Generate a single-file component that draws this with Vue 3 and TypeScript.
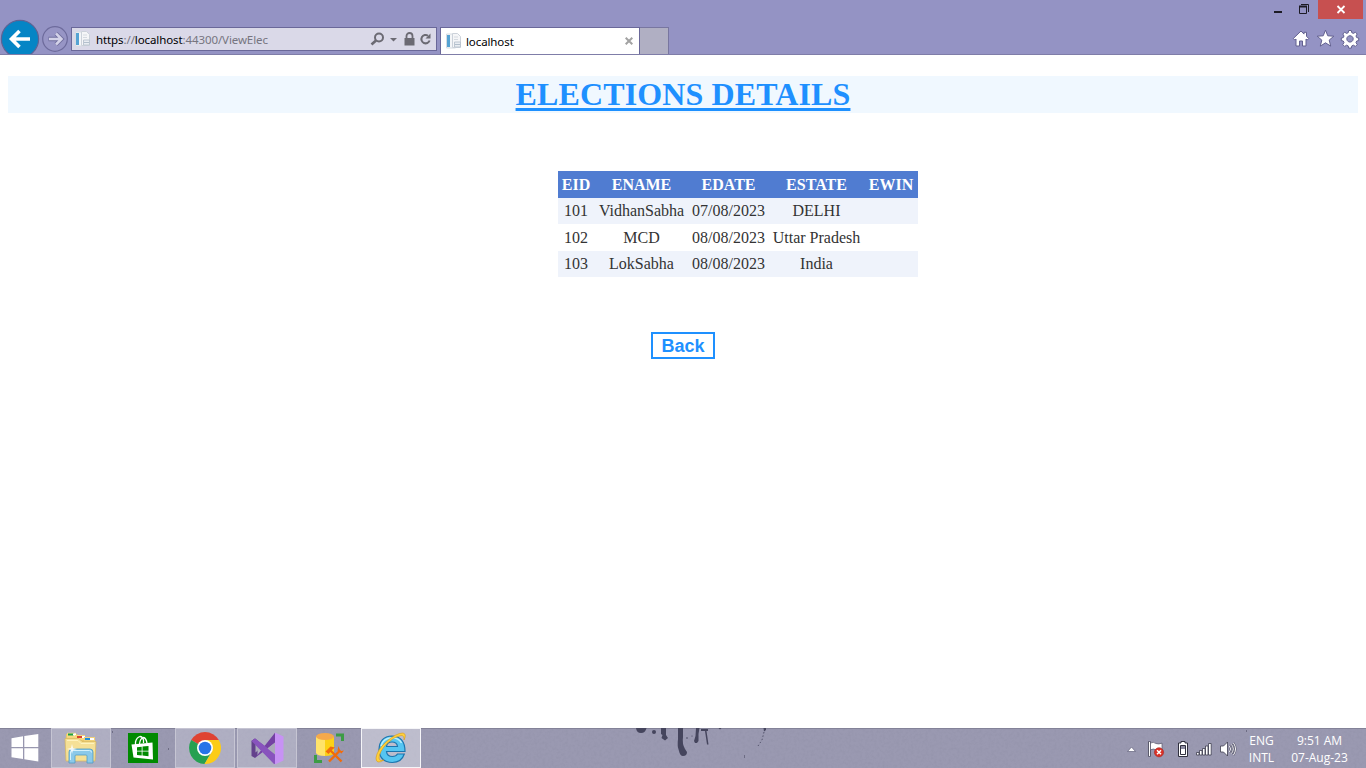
<script setup lang="ts">
interface Election {
  id: number
  name: string
  date: string
  state: string
  winner: string
}

const columns: string[] = ['EID', 'ENAME', 'EDATE', 'ESTATE', 'EWIN']

const elections: Election[] = [
  { id: 101, name: 'VidhanSabha', date: '07/08/2023', state: 'DELHI', winner: '' },
  { id: 102, name: 'MCD', date: '08/08/2023', state: 'Uttar Pradesh', winner: '' },
  { id: 103, name: 'LokSabha', date: '08/08/2023', state: 'India', winner: '' },
]
</script>

<template>
  <div class="screen">
    <header class="chrome">
      <svg class="nav" width="71" height="36" viewBox="0 18 71 36">
        <circle cx="20" cy="39" r="18.6" fill="#0585c5" stroke="#5f6395" stroke-width="1.2" />
        <path d="M30 39H12M19.5 31L11.5 39L19.5 47" fill="none" stroke="#fff" stroke-width="3.6" />
        <circle cx="55" cy="39" r="12.3" fill="#9795c5" stroke="#6d6b9c" stroke-width="1.2" />
        <path d="M48.5 39H61M56 33.5L61.5 39L56 44.5" fill="none" stroke="#716f9f" stroke-width="4.4" />
        <path d="M49 39H61M56 33.5L61.5 39L56 44.5" fill="none" stroke="#d3d2e8" stroke-width="2.5" />
      </svg>

      <div class="address">
        <svg class="page-icon" width="16" height="16" viewBox="0 0 16 16">
          <path d="M.5 1h9v14h-9z" fill="#f4f6f8" stroke="#d6dce2" />
          <path d="M1 2h3v12H1z" fill="#55a3d3" />
          <path d="M6.500.500h5l3 3v11h-8z" fill="#f5f6f8" stroke="#ccd2da" />
          <path d="M8 4h4M8 6.500h4" stroke="#d5dae0" />
          <path d="M8.500 9h6v5h-6z" fill="#e9edf2" stroke="#bcc6d1" />
          <path d="M9 11.500h5" stroke="#b2bfcc" />
        </svg>
        <span class="url">https<i>://</i>localhost<i>:44300/ViewElec</i></span>
        <svg class="tools" width="64" height="16" viewBox="0 0 64 16">
          <circle cx="9" cy="6.500" r="4" fill="none" stroke="#6b6a73" stroke-width="2" />
          <path d="M6 9.500L1.500 13.500" stroke="#6b6a73" stroke-width="2.600" />
          <path d="M20 7h7L23.500 10.500z" fill="#6b6a73" />
          <path d="M34.500 7h10v7.500h-10z" fill="#6b6a73" />
          <path d="M36.500 7.500V5a3 3 0 0 1 6 0v2.500" fill="none" stroke="#6b6a73" stroke-width="1.800" />
          <path d="M58 4.700A4.200 4.200 0 1 0 59.600 9.500" fill="none" stroke="#6b6a73" stroke-width="2" />
          <path d="M60.500 2.500V7.500h-5z" fill="#6b6a73" />
        </svg>
      </div>

      <div class="tab">
        <svg class="page-icon" width="16" height="16" viewBox="0 0 16 16">
          <path d="M.5 1h9v14h-9z" fill="#f4f6f8" stroke="#d6dce2" />
          <path d="M1 2h3v12H1z" fill="#55a3d3" />
          <path d="M6.500.500h5l3 3v11h-8z" fill="#f5f6f8" stroke="#ccd2da" />
          <path d="M8 4h4M8 6.500h4" stroke="#d5dae0" />
          <path d="M8.500 9h6v5h-6z" fill="#e9edf2" stroke="#bcc6d1" />
          <path d="M9 11.500h5" stroke="#b2bfcc" />
        </svg>
        <span class="tab-title">localhost</span>
        <svg class="tab-close" width="8" height="8" viewBox="0 0 8 8">
          <path d="M.7.7L7.300 7.300M7.300.7L.7 7.300" stroke="#a2a2a2" stroke-width="2" />
        </svg>
      </div>
      <div class="new-tab"></div>

      <svg class="window-tools" width="116" height="54" viewBox="1250 0 116 54">
        <path d="M1274 11h8v2h-8z" fill="#1c1b25" />
        <path d="M1299.500 6.500h7v7h-7z" fill="none" stroke="#1c1b25" />
        <path d="M1299 5.500h8v2h-8z" fill="#1c1b25" />
        <path d="M1301 4.500h7.500v7.500" fill="none" stroke="#1c1b25" />
        <path d="M1318 0h45v19h-45z" fill="#c75050" />
        <path d="M1337.500 6L1344.500 13M1344.500 6L1337.500 13" stroke="#fff" stroke-width="1.800" />
        <g fill="#fff" stroke="#62608f" stroke-width="1" stroke-linejoin="round">
          <path d="M1301 31l-7.700 7.500 1.500 1.500 1.200-1v7h3.500v-5h3v5h3.500v-7l1.200 1 1.500-1.500-2.200-2.200v-4h-2.500v1.800z" />
          <path d="M1325.500 30.200l2.300 5.600 6 .4-4.600 3.900 1.500 6-5.200-3.300-5.200 3.300 1.500-6-4.600-3.900 6-.4z" />
          <path fill-rule="evenodd" d="M1348.700 30.500h2.600l.5 2.200 1.600.7 2-1.200 1.800 1.800-1.200 2 .7 1.600 2 .4v2.600l-2 .4-.7 1.600 1.200 2-1.800 1.800-2-1.200-1.600.7-.5 2.200h-2.600l-.5-2.200-1.600-.7-2 1.200-1.800-1.800 1.200-2-.7-1.600-2-.4v-2.600l2-.4.7-1.600-1.200-2 1.800-1.800 2 1.200 1.600-.7zM1350 35.700a3.200 3.200 0 1 0 .01 0z" />
        </g>
      </svg>
    </header>

    <main class="page">
      <h1><span>ELECTIONS DETAILS</span></h1>
      <table>
        <colgroup>
          <col class="c-id" /><col class="c-name" /><col class="c-date" /><col class="c-state" /><col class="c-win" />
        </colgroup>
        <thead>
          <tr><th v-for="c in columns" :key="c">{{ c }}</th></tr>
        </thead>
        <tbody>
          <tr v-for="e in elections" :key="e.id">
            <td>{{ e.id }}</td>
            <td>{{ e.name }}</td>
            <td>{{ e.date }}</td>
            <td>{{ e.state }}</td>
            <td>{{ e.winner }}</td>
          </tr>
        </tbody>
      </table>
      <button class="back" type="button">Back</button>
    </main>

    <footer class="taskbar">
      <svg class="wallpaper" width="1366" height="40" viewBox="0 0 1366 40">
        <defs>
          <filter id="paper" x="0" y="0" width="100%" height="100%">
            <feTurbulence type="fractalNoise" baseFrequency="0.35" numOctaves="3" seed="4" />
            <feColorMatrix values="0 0 0 0 .25  0 0 0 0 .25  0 0 0 0 .35  1.400 0 0 0 -.55" />
          </filter>
        </defs>
        <rect width="1366" height="40" filter="url(#paper)" opacity=".38" />
        <path d="M0 .5h1366" stroke="#838298" />
        <g fill="#45455d">
          <path d="M636 0h10.500q-1 5-5.500 5t-5-5z" />
          <circle cx="654" cy="4" r="2" />
          <path d="M661 0h5v7l2 3-3 2.500-3.500-2.500 1-3-1.500-1z" />
          <path d="M678 0h5v9q-1 7 2 12l2 3q0 4-4 4-3 0-4-5-2-5-1-12z" />
          <path d="M696 0h3.500l-1 6v7l-1.500 2h-2l-1-2 1.500-5z" />
          <path d="M701 1h7v2h-1.500l2 13.500h-1.500L705 3h-4z" />
          <path d="M718.500 0h3l-1.500 1.500zM763.500 0h2.500v2l-2 1.500z" />
          <circle cx="687" cy="10" r=".8" /><circle cx="692" cy="8" r=".6" />
        </g>
        <path d="M764 4l-2 8-4 6" fill="none" stroke="#55556d" stroke-dasharray="1.500 2" />
        <path d="M744.500 27v3M112.500 3v2M168.500 20v2M1246.500 2v2" stroke="#5c5b72" opacity=".7" />
      </svg>

      <div class="start">
        <svg width="28" height="28" viewBox="0 0 28 28">
          <path d="M.5 4.200L12 2.300V13H.5zM13.300 2.100L27.300 0v13h-14zM.5 14.300H12V25L.5 23.200zM13.300 14.300h14v13.200l-14-2.200z" fill="#fff" />
        </svg>
      </div>

      <div class="task open">
        <svg width="34" height="32" viewBox="0 0 34 32">
          <path d="M2 2h11l2 3h10l2 2h4v22H2z" fill="#e7c76a" />
          <path d="M3 .8h9v5H3z" fill="#f5d982" />
          <path d="M4 1.500h6v2H4z" fill="#18a044" /><path d="M9 1.500h3v2H9z" fill="#fff" />
          <path d="M11 3h10v5H11z" fill="#f5d77e" /><path d="M13 4h5v2h-5z" fill="#da412c" /><path d="M18 4h3v2h-3z" fill="#fff" />
          <path d="M20 5h11v5H20z" fill="#f1d27a" /><path d="M21 6h5v2h-5z" fill="#208dda" /><path d="M26 6h4v2h-4z" fill="#fff" />
          <path d="M1 6.500h14l3 3h14L31 29H2z" fill="#f5e096" stroke="#d9b65a" stroke-width=".7" />
          <path d="M3 8.500h11l3 3h13" fill="none" stroke="#fff3bd" />
          <path d="M5 31V20q0-3 3-3h18q3 0 3 3v11h-6v-7q0-1-1-1H12q-1 0-1 1v7z" fill="#8bc9e9" stroke="#4f9cc4" stroke-width=".8" />
          <path d="M6.500 28v-8q0-1.500 2-1.500h17q2 0 2 2" fill="none" stroke="#d5f1fb" />
          <path d="M8 12l1 4 4 1-4 1-1 4-1-4-4-1 4-1z" fill="#fff" opacity=".85" />
        </svg>
      </div>

      <div class="task">
        <svg width="30" height="30" viewBox="0 0 30 30">
          <path d="M0 0h30v30H0z" fill="#008a00" />
          <path d="M3.500 11.500L24.500 9.500 25 26.500 5.500 24.500z" fill="#fff" />
          <path d="M7.500 12V9Q8.500 4.500 12 3.500q2.500 0 3.500 3.500v3M11.500 11q.5-5.500 4-6.500 2.500.5 3.500 5.500" fill="none" stroke="#fff" stroke-width="1.300" />
          <path d="M9 14.200l4.700-.5v4H9zm5.500-.6l6-.6v4.700h-6zM9 18.500h4.700v4l-4.700-.5zm5.500 0h6V23.300l-6-.7z" fill="#008a00" />
        </svg>
      </div>

      <div class="task open">
        <svg width="32" height="32" viewBox="0 0 32 32">
          <path d="M16 16L2.200 8A16 16 0 0 1 29.800 8z" fill="#df4332" />
          <path d="M16 16L2.200 8A16 16 0 0 0 15.500 32L22.500 20z" fill="#26a051" />
          <path d="M16 8h13.800A16 16 0 0 1 15.500 32L23 19.500z" fill="#fccc16" />
          <circle cx="16" cy="16" r="8" fill="#fff" />
          <circle cx="16" cy="16" r="6.300" fill="#2774e8" />
        </svg>
      </div>

      <div class="task open">
        <svg width="33" height="33" viewBox="0 0 33 33">
          <path d="M.5 9L4 6.500 24 22v9.500z" fill="#7549ad" />
          <path d="M.5 9L4 6.500 6.500 8.500v15L4 26 .5 24z" fill="#63418c" />
          <path d="M4.500 12.500v8L9 16.500z" fill="#aaa9b9" />
          <path d="M4 26L24 .8v10L6.500 24z" fill="#7441a3" />
          <path d="M.5 9L4 6.500l21 16v9L23 32z" fill="#8853bd" />
          <path d="M24 .5l8.500 4v24l-8.500 4z" fill="#c792f4" />
          <path d="M24 10.500v12l-7.500-6z" fill="#aaa9b9" />
        </svg>
      </div>

      <div class="task">
        <svg width="32" height="32" viewBox="0 0 32 32">
          <path d="M3 5v16q1 3 9 3V5z" fill="#ffe36a" />
          <path d="M12 5v19q8 0 9-3V5z" fill="#fcd116" />
          <ellipse cx="12" cy="4.500" rx="9" ry="3.500" fill="#f5a94c" />
          <path d="M23 1.500h8v7.500h-3V4.500h-5zM1 23h3v5h5v3H1z" fill="#3c9c45" />
          <path d="M16.500 17.500l12 12M27 18.500L16 29.500" stroke="#f26b0a" stroke-width="2.400" />
          <path d="M12.500 19.500l5-5 4.500 1-2.500 2-4 4.500zM25.500 14l-1 4.500 4 3 2.500-3-3 .5-1.500-2z" fill="#f26b0a" />
        </svg>
      </div>

      <div class="task active">
        <svg width="32" height="32" viewBox="0 0 32 32">
          <path d="M30 19.500H11.500q.5 5 6 5 3.500 0 5-2.500h6.800q-2.800 8.500-12 8.500Q4.500 30 4 17.500 4.500 4.500 17 4 30 4.500 30 19.500zM11.500 14.500h11q-.5-4.500-5.500-4.500t-5.500 4.500z" fill="#55c5f2" fill-rule="evenodd" stroke="#1c75ae" stroke-width="1.200" />
          <path d="M6 14q2-7.500 10.500-8.200 7.500 0 10 5.200" fill="none" stroke="#b9effc" stroke-width="1.600" />
          <path d="M9 28Q1 33 1 26 2 18 11 10 21 1 28 1q4 1 1 7 .5-4.500-3-4.500-7 1-14 8Q4 20 4 26q.5 3.500 5 2z" fill="#ffd03a" stroke="#d99b16" stroke-width=".6" />
        </svg>
      </div>

      <svg class="tray" width="116" height="18" viewBox="1124 740 116 18">
        <path d="M1127.500 751.500h8l-4-4.500z" fill="#fff" stroke="#62617b" stroke-width=".7" />
        <path d="M1149.500 741.500v15" stroke="#3e3e50" stroke-width="3" />
        <path d="M1149.500 742v14" stroke="#fff" stroke-width="1.300" />
        <path d="M1150.500 743q3-1.500 5.500.5 2.500 1 6-.3v6.500q-3 1-6 .1-2.500-1.500-5.500 0z" fill="#fff" stroke="#565568" stroke-width=".7" />
        <circle cx="1159" cy="752.300" r="4.600" fill="#da3126" stroke="#a72827" stroke-width=".6" />
        <path d="M1157 750.300l4 4m0-4l-4 4" stroke="#fff" stroke-width="1.500" />
        <path d="M1181 741.500h4v1.500h2.500v13.500h-9v-13.500h2.500z" fill="#fff" stroke="#30303e" />
        <path d="M1180.500 745.500h5v9h-5z" fill="#8c8ba1" stroke="#30303e" />
        <path d="M1181 749h4v5h-4z" fill="#fff" />
        <g fill="#fff" stroke="#3d3d4f" stroke-width=".8">
          <path d="M1196.500 752.500h2.500v2.500h-2.500zM1199.500 750.500h2.500v4.500h-2.500zM1202.500 748.500h2.500v6.500h-2.500zM1205.500 746h2.500v9h-2.500zM1208.500 743.500h2.700v11.500h-2.700z" />
          <path d="M1220.500 746h3l4-4v14l-4-4h-3z" />
        </g>
        <path d="M1229.500 746q2 3 0 6M1231.500 744.500q3.500 4.500 0 9M1233.500 743q4 6 0 12" fill="none" stroke="#4b4a60" stroke-width="2" />
        <path d="M1229.500 746q2 3 0 6M1231.500 744.500q3.500 4.500 0 9M1233.500 743q4 6 0 12" fill="none" stroke="#fff" stroke-width="1" />
      </svg>
      <div class="lang"><span>ENG</span><span>INTL</span></div>
      <div class="clock"><span class="time">9:51 AM</span><span class="date">07-Aug-23</span></div>
    </footer>
  </div>
</template>

<style>
body {
  margin: 0;
  overflow: hidden;
}
</style>

<style scoped>
.screen {
  width: 1366px;
  height: 768px;
  display: flex;
  flex-direction: column;
  background: #fff;
}

.screen svg {
  display: block;
  flex: none;
}

.chrome {
  box-sizing: border-box;
  height: 55px;
  flex: none;
  display: flex;
  align-items: flex-end;
  background: #9493c4;
  border-bottom: 1px solid #7f7da8;
  font-family: "Noto Sans", "Open Sans", sans-serif;
  font-size: 12px;
}

.address {
  box-sizing: border-box;
  width: 366px;
  height: 24px;
  margin: 0 3px 3px 0;
  padding: 0 2px 0 3px;
  display: flex;
  align-items: center;
  background: #dad9e8;
  border: 1px solid #6a6899;
}

.url {
  margin-left: 5px;
  color: #000;
  white-space: nowrap;
  font-size: 11.5px;
  letter-spacing: -0.1px;
}

.url i {
  font-style: normal;
  color: #76757f;
}

.tools {
  margin-left: auto;
}

.tab {
  box-sizing: border-box;
  width: 200px;
  height: 27px;
  padding: 0 6px 0 5px;
  display: flex;
  align-items: center;
  background: #fff;
  border: 1px solid #6a6899;
  border-bottom: 0;
}

.tab-title {
  margin-left: 4px;
  font-size: 11.5px;
  letter-spacing: -0.1px;
}

.tab-close {
  margin-left: auto;
}

.new-tab {
  box-sizing: border-box;
  width: 29px;
  height: 27px;
  background: #b0afc3;
  border: 1px solid #7876a0;
  border-width: 1px 1px 0 0;
}

.window-tools {
  margin-left: auto;
}

.page {
  flex: 1;
  padding: 21px 8px 0;
  display: flex;
  flex-direction: column;
  align-items: center;
  font-family: "Liberation Serif", "Times New Roman", serif;
}

h1 {
  align-self: stretch;
  height: 37px;
  margin: 0 0 58px;
  background: #f0f8ff;
  color: #1e90ff;
  font-size: 32px;
  line-height: 37px;
  text-align: center;
}

h1 span {
  letter-spacing: 0.12px;
  text-decoration: underline;
  text-decoration-thickness: 3px;
  text-decoration-skip-ink: none;
  text-underline-offset: 3px;
}

table {
  width: 360px;
  margin-left: 110px;
  table-layout: fixed;
  border-collapse: collapse;
  color: #333;
  font-size: 16px;
  line-height: 18px;
  text-align: center;
  white-space: nowrap;
}

.c-id { width: 37px; }
.c-name { width: 94px; }
.c-date { width: 80px; }
.c-state { width: 96px; }
.c-win { width: 53px; }

th,
td {
  box-sizing: border-box;
  height: 26.5px;
  padding: 0 1px 0 0;
}

th,
tbody tr:nth-child(2) td {
  padding-top: 2px;
}

thead tr {
  background: #507cd1;
  color: #fff;
}

tbody tr:nth-child(odd) {
  background: #eff3fb;
}

.back {
  width: 64px;
  height: 27px;
  margin-top: 55px;
  padding: 1px 0 0;
  background: #fff;
  border: 2px solid #1e90ff;
  color: #1e90ff;
  font: bold 18px/22px "Liberation Sans", Arial, sans-serif;
}

.taskbar {
  position: relative;
  height: 40px;
  flex: none;
  display: flex;
  align-items: center;
  background: #9a99b1;
  color: #fff;
  font-family: "Open Sans", "Noto Sans", sans-serif;
  font-size: 12px;
}

.taskbar > * {
  position: relative;
}

.taskbar > .wallpaper {
  position: absolute;
  left: 0;
  top: 0;
}

.start {
  width: 40px;
  padding-left: 11px;
}

.task {
  box-sizing: border-box;
  width: 60px;
  height: 40px;
  margin-right: 2px;
  display: flex;
  align-items: center;
  justify-content: center;
  border: 1px solid transparent;
}

.open {
  background: rgba(210, 210, 224, 0.38);
  border-color: #c6c5d3;
}

.active {
  background: rgba(225, 225, 234, 0.5);
  border-color: #f5f5f8;
}

.tray {
  margin: 2px 0 0 auto;
}

.lang,
.clock {
  display: flex;
  flex-direction: column;
  align-items: center;
  padding-top: 2px;
  line-height: 17px;
  white-space: nowrap;
}

.lang {
  width: 43px;
}

.clock {
  width: 73px;
  margin-right: 10px;
}
</style>
